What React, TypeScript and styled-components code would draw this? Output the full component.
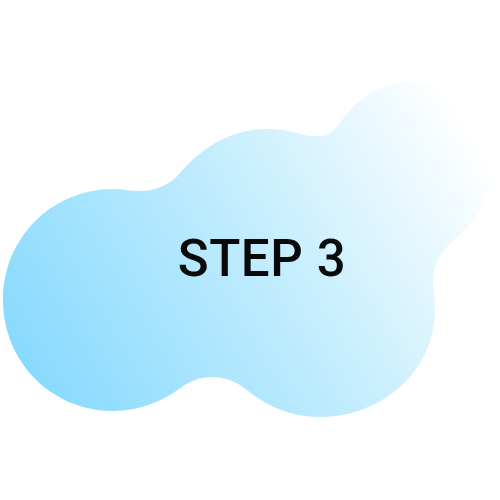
import React from "react";
import styled, { createGlobalStyle } from "styled-components";

const Global = createGlobalStyle`
  html, body { margin: 0; padding: 0; background: #ffffff; }
  body { font-family: "Roboto", "Liberation Sans", sans-serif; }
`;

const Stage = styled.div`
  position: relative;
  width: 500px;
  height: 500px;
  overflow: hidden;
  background: #ffffff;
`;

const Blob = styled.svg`
  position: absolute;
  inset: 0;
  width: 500px;
  height: 500px;
`;

const Label = styled.div`
  position: absolute;
  left: 0;
  top: 0;
  width: 500px;
  height: 500px;
  display: flex;
  align-items: center;
  justify-content: center;
  padding: 16px 0 0 24px;
  box-sizing: border-box;
`;

const Title = styled.h1`
  margin: 0;
  font-family: "Roboto", "Liberation Sans", sans-serif;
  font-weight: 500;
  font-size: 51px;
  letter-spacing: 0.6px;
  color: #0a0a0a;
  line-height: 1;
  white-space: nowrap;
`;

const blobPath =
  "M 3 300 C 3 238 52 189 113 189 C 122 189 130 191 140 191 C 155 191 170 185 180 173 " +
  "C 202 147 232 129 267 129 C 283 129 298 133 305 135 C 310 136 316 136 320 136 " +
  "C 328 136 335 130 340 123 C 357 98 382 82 410 82 C 452 82 492 118 492 162 " +
  "C 492 196 476 222 457 237 C 442 250 433 265 433 280 C 433 290 435 298 435 310 " +
  "C 435 370 383 417 320 417 C 290 417 265 405 247 390 C 237 382 225 377 213 377 " +
  "C 200 377 190 381 182 387 C 163 401 140 411 113 411 C 52 411 3 362 3 300 Z";

export default function App() {
  return (
    <>
      <Global />
      <Stage>
        <Blob viewBox="0 0 500 500" aria-hidden="true">
          <defs>
            <linearGradient id="blobGrad" gradientUnits="userSpaceOnUse" x1="20" y1="400" x2="470" y2="130">
              <stop offset="0" stopColor="#84d8ff" />
              <stop offset="0.5" stopColor="#bdebfd" />
              <stop offset="1" stopColor="#ffffff" />
            </linearGradient>
          </defs>
          <path d={blobPath} fill="url(#blobGrad)" />
        </Blob>
        <Label>
          <Title>STEP 3</Title>
        </Label>
      </Stage>
    </>
  );
}
